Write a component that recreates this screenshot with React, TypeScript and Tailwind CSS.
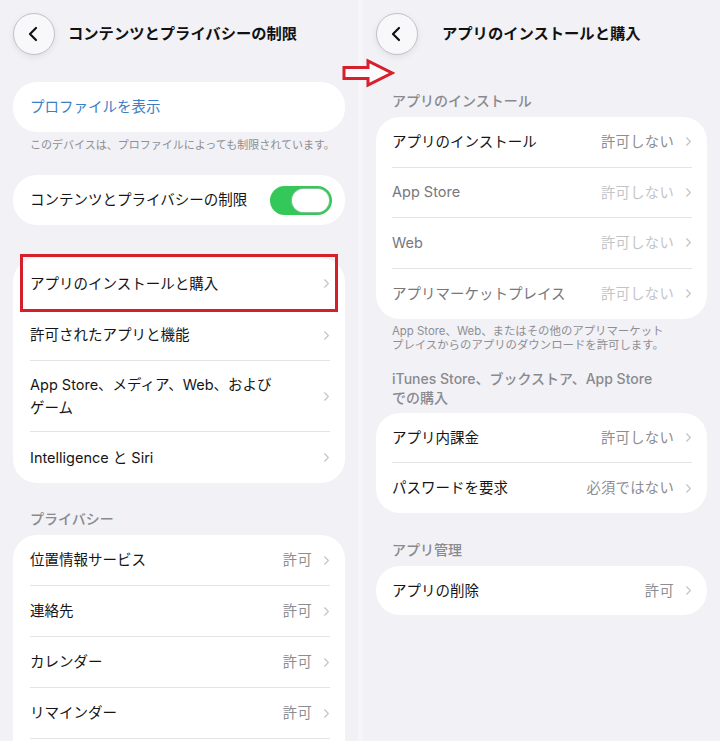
import { ChevronLeft, ChevronRight } from 'lucide-react';

const FONT = { fontFamily: 'Inter, "Noto Sans CJK JP", "Noto Sans", sans-serif' };

type RowProps = {
  label: React.ReactNode;
  value?: string;
  disabled?: boolean;
  last?: boolean;
  tall?: boolean;
  highlight?: boolean;
  inset?: string;
  height?: string;
};

function Row({
  label,
  value,
  disabled,
  last,
  tall,
  highlight,
  inset = 'ml-[17px] mr-[15px]',
  height = 'h-[51px]',
}: RowProps) {
  return (
    <div className="relative">
      {highlight && (
        <div className="absolute left-[7px] right-[7px] top-[-4px] bottom-[-2px] border-[3px] border-[#d5202b] pointer-events-none" />
      )}
      <div
        className={`${inset} flex items-center ${tall ? 'h-[71px]' : height} ${
          last ? '' : 'border-b border-[#e4e4e7]'
        }`}
      >
        <div
          className={`flex-1 text-[14.5px] ${tall ? 'leading-[23px]' : 'leading-[20px]'} ${
            disabled ? 'text-[#77777c]' : 'text-[#151517]'
          }`}
        >
          {label}
        </div>
        {value && (
          <span className={`text-[14.3px] tracking-[0.3px] ${disabled ? 'text-[#c4c4c8]' : 'text-[#8d8d92]'}`}>
            {value}
          </span>
        )}
        <ChevronRight size={15} strokeWidth={1.8} className="ml-[7px] -mr-[4px] text-[#c3c3c7]" />
      </div>
    </div>
  );
}

function Card({ children, className = '' }: { children: React.ReactNode; className?: string }) {
  return <div className={`bg-white rounded-[24px] ${className}`}>{children}</div>;
}

function BackButton() {
  return (
    <div className="w-[42px] h-[42px] shrink-0 rounded-full border border-[#c2c2c7] bg-[#f8f8fa] shadow-[0_2px_6px_rgba(0,0,0,0.08)] flex items-center justify-center">
      <ChevronLeft size={24} strokeWidth={2.2} className="text-[#111] -ml-[2px]" />
    </div>
  );
}

function SectionHeader({ children, className = '' }: { children: React.ReactNode; className?: string }) {
  return (
    <div className={`pl-[16px] text-[14px] font-medium text-[#8a8a8e] ${className}`}>{children}</div>
  );
}

function LeftPanel() {
  return (
    <div className="w-[358px] shrink-0 px-[13px] pt-[13px]">
      <div className="flex items-center h-[42px]">
        <BackButton />
        <div className="ml-[13px] text-[15.3px] font-bold text-[#111]">コンテンツとプライバシーの制限</div>
      </div>

      <Card className="mt-[27px] h-[50px] flex items-center px-[17px]">
        <span className="text-[14.5px] text-[#3b7ec6]">プロファイルを表示</span>
      </Card>
      <div className="mt-[6px] pl-[17px] text-[11px] leading-[14px] text-[#8e8e93]">
        このデバイスは、プロファイルによっても制限されています。
      </div>

      <Card className="mt-[23px] h-[50px] flex items-center pl-[17px] pr-[13px]">
        <span className="flex-1 text-[14.5px] text-[#151517]">コンテンツとプライバシーの制限</span>
        <div className="w-[62px] h-[29px] rounded-full bg-[#34c759] flex items-center justify-end p-[2px]">
          <div className="w-[39px] h-[25px] rounded-full bg-white border border-[#2f9e4a]/60" />
        </div>
      </Card>

      <Card className="mt-[33px]">
        <Row label="アプリのインストールと購入" highlight height="h-[52px]" />
        <Row label="許可されたアプリと機能" />
        <Row
          tall
          label={
            <>
              App Store、メディア、Web、および
              <br />
              ゲーム
            </>
          }
        />
        <Row label="Intelligence と Siri" last />
      </Card>

      <SectionHeader className="mt-[26px] leading-[20px] pl-[17px]">プライバシー</SectionHeader>
      <Card className="mt-[6px] pb-[40px]">
        <Row label="位置情報サービス" value="許可" />
        <Row label="連絡先" value="許可" />
        <Row label="カレンダー" value="許可" />
        <Row label="リマインダー" value="許可" />
      </Card>
    </div>
  );
}

function RightPanel() {
  const inset = 'ml-[16px] mr-[15px]';
  return (
    <div className="flex-1 px-[13px] pt-[13px]">
      <div className="flex items-center h-[42px]">
        <BackButton />
        <div className="ml-[24px] text-[15.3px] font-bold text-[#111]">アプリのインストールと購入</div>
      </div>

      <SectionHeader className="mt-[36px] leading-[20px]">アプリのインストール</SectionHeader>
      <Card className="mt-[6px]">
        <Row inset={inset} height="h-[50.5px]" label="アプリのインストール" value="許可しない" />
        <Row inset={inset} height="h-[50.5px]" label="App Store" value="許可しない" disabled />
        <Row inset={inset} height="h-[50.5px]" label="Web" value="許可しない" disabled />
        <Row inset={inset} height="h-[50.5px]" label="アプリマーケットプレイス" value="許可しない" disabled last />
      </Card>
      <div className="mt-[5px] pl-[16px] text-[11.4px] leading-[14px] text-[#8e8e93]">
        App Store、Web、またはその他のアプリマーケット
        <br />
        プレイスからのアプリのダウンロードを許可します。
      </div>

      <SectionHeader className="mt-[17px] leading-[19px]">
        iTunes Store、ブックストア、App Store
        <br />
        での購入
      </SectionHeader>
      <Card className="mt-[6px]">
        <Row inset={inset} height="h-[50px]" label="アプリ内課金" value="許可しない" />
        <Row inset={inset} height="h-[50px]" label="パスワードを要求" value="必須ではない" last />
      </Card>

      <SectionHeader className="mt-[27px] leading-[20px]">アプリ管理</SectionHeader>
      <Card className="mt-[6px]">
        <Row inset={inset} height="h-[49px]" label="アプリの削除" value="許可" last />
      </Card>
    </div>
  );
}

export default function App() {
  return (
    <div className="relative w-[720px] h-[741px] overflow-hidden bg-[#f1f1f6] flex" style={FONT}>
      <LeftPanel />
      <div className="w-[5px] shrink-0 bg-[#f6f6f9]" />
      <RightPanel />

      <svg className="absolute left-[341px] top-[58px]" width="54" height="30" viewBox="0 0 54 30">
        <polygon
          points="3,9.5 27,9.5 27,3 51,15 27,27 27,20.5 3,20.5"
          fill="#fbfbfd"
          stroke="#d6202b"
          strokeWidth="3"
          strokeLinejoin="miter"
        />
      </svg>
    </div>
  );
}
